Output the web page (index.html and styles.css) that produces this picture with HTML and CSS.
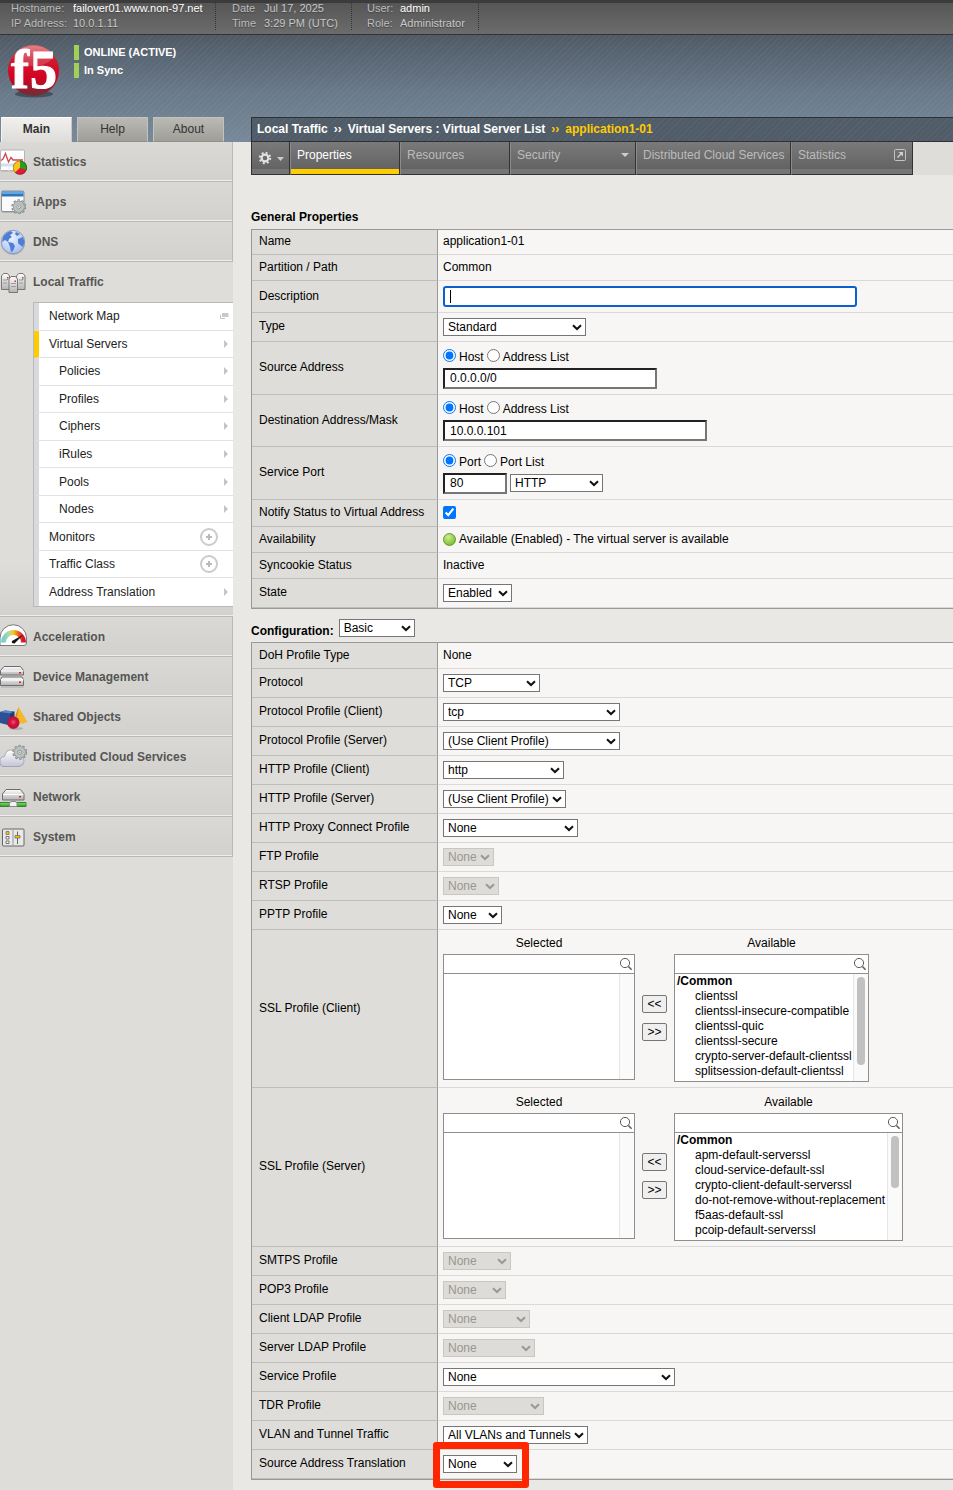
FILE: index.html
```html
<!DOCTYPE html>
<html lang="en">
<head>
<meta charset="utf-8">
<title>Virtual Server Properties</title>
<link rel="stylesheet" href="styles.css">
</head>
<body>
<svg class="defs" aria-hidden="true">
  <defs>
    <linearGradient id="metal" x1="0" y1="0" x2="0" y2="1"><stop offset="0" stop-color="#fdfdfd"/><stop offset="1" stop-color="#b4b4b4"/></linearGradient>
    <linearGradient id="cloud" x1="0" y1="0" x2="0" y2="1"><stop offset="0" stop-color="#ffffff"/><stop offset="1" stop-color="#c3c4d6"/></linearGradient>
    <radialGradient id="globe" cx="0.4" cy="0.3" r="0.8"><stop offset="0" stop-color="#eef4ff"/><stop offset="1" stop-color="#9fb9ec"/></radialGradient>
    <radialGradient id="red" cx="0.5" cy="0.45" r="0.6"><stop offset="0" stop-color="#f0557b"/><stop offset="0.4" stop-color="#d3123f"/><stop offset="1" stop-color="#b50d30"/></radialGradient>
    <radialGradient id="green" cx="0.4" cy="0.3" r="0.8"><stop offset="0" stop-color="#c9f08c"/><stop offset="1" stop-color="#6fb222"/></radialGradient>
    <linearGradient id="ball" x1="0" y1="0" x2="0" y2="1"><stop offset="0" stop-color="#e46a72"/><stop offset="0.3" stop-color="#cf1a30"/><stop offset="0.65" stop-color="#d2021f"/><stop offset="1" stop-color="#6b3038"/></linearGradient>
    <linearGradient id="dial"><stop offset="0" stop-color="#6fd3d0"/><stop offset="0.3" stop-color="#bfd79a"/><stop offset="0.5" stop-color="#f7c81f"/><stop offset="0.75" stop-color="#ee5b23"/><stop offset="1" stop-color="#d8102c"/></linearGradient>
    <symbol id="gear" viewBox="0 0 16 16">
      <circle cx="8" cy="8" r="6.4" fill="none" stroke="#77807f" stroke-width="2.6" stroke-dasharray="2.2 1.82"/>
      <circle cx="8" cy="8" r="4.6" fill="none" stroke="#77807f" stroke-width="3"/>
      <circle cx="8" cy="8" r="4" fill="none" stroke="#b9c2c1" stroke-width="3.2"/>
      <circle cx="8" cy="8" r="6.2" fill="none" stroke="#a9b3b2" stroke-width="1.6" stroke-dasharray="1.8 2.095" stroke-dashoffset="-.2"/>
      <circle cx="8" cy="8" r="2.1" fill="#e4e6e5" stroke="#7c8584" stroke-width=".8"/>
      <circle cx="8" cy="8" r=".7" fill="#7c8584"/>
    </symbol>
    <symbol id="glass" viewBox="0 0 14 14"><circle cx="6" cy="6" r="4.6" fill="none" stroke="#5c5c5c"/><path d="M9.4 9.4L12.6 12.8" stroke="#5c5c5c" stroke-width="1.5"/></symbol>
    <symbol id="arrow" viewBox="0 0 6 8"><path d="M1 0L5 4L1 8Z" fill="#c4c4c4"/></symbol>
    <symbol id="plus" viewBox="0 0 18 18"><circle cx="9" cy="9" r="8" fill="#fff" stroke="#cbcbcb" stroke-width="2"/><path d="M6 9h6M9 6v6" stroke="#b9b9b9" stroke-width="2"/></symbol>
  </defs>
</svg>

<div class="topbar">
  <dl class="info info-host"><dt>Hostname:</dt><dd class="strong">failover01.www.non-97.net</dd><dt>IP Address:</dt><dd>10.0.1.11</dd></dl>
  <dl class="info info-date"><dt>Date</dt><dd>Jul 17, 2025</dd><dt>Time</dt><dd>3:29 PM (UTC)</dd></dl>
  <dl class="info info-user"><dt>User:</dt><dd class="strong">admin</dd><dt>Role:</dt><dd>Administrator</dd></dl>
</div>

<header class="banner">
  <div class="brand">
    <div class="brand-row">
      <svg class="logo" viewBox="0 0 54 56" role="img" aria-label="f5">
        <ellipse cx="27" cy="50" rx="19" ry="3.500" fill="#2c3540" opacity=".6"/>
        <circle cx="26.500" cy="26.500" r="25.500" fill="url(#ball)"/>
        <ellipse cx="26.500" cy="12" rx="19" ry="10" fill="#fff" opacity=".16"/>
        <text x="4" y="44" class="logo-text">f</text>
        <text x="23" y="44" class="logo-text">5</text>
      </svg>
      <div class="status"><span>ONLINE (ACTIVE)</span><span>In Sync</span></div>
    </div>
    <nav class="tabs"><a href="#main" class="tab tab-on">Main</a><a href="#help" class="tab">Help</a><a href="#about" class="tab">About</a></nav>
  </div>
  <nav class="crumbs"><a href="#lt">Local Traffic</a><span>››</span><a href="#vs">Virtual Servers : Virtual Server List</a><span class="gold">››</span><span class="gold">application1-01</span></nav>
</header>

<div class="layout">
<nav class="side">
  <a class="section" href="#statistics"><svg viewBox="0 0 28 28"><rect x="0.500" y="3" width="24" height="20.500" rx="1" fill="#aaa"/><rect x="0.500" y="2" width="24" height="20.500" rx="1" fill="#fff" stroke="#b5b5b5"/><path d="M1 15.500h23v3h-23z" fill="#cfe0ee"/><path d="M9 15v8M17 15v8" stroke="#dfe9f2"/><path d="M1 12.500L3 11 5.500 5.500 8.500 14 11 9.500 13 12H23" fill="none" stroke="#d2434b" stroke-width="1.300"/><circle cx="20" cy="19.700" r="7" fill="#dc1f35"/><path d="M20 19.700V12.700A7 7 0 0 1 26.500 22Z" fill="#22a11c"/><path d="M20 19.700V12.700A7 7 0 0 0 15 24.600Z" fill="#f7c51d"/><circle cx="20" cy="19.700" r="6.700" fill="none" stroke="#000" stroke-opacity=".35" stroke-width=".7"/></svg>Statistics</a>
  <a class="section" href="#iapps"><svg viewBox="0 0 28 28"><rect x="1.500" y="3.500" width="22.500" height="21" rx="1.500" fill="#999"/><rect x="1.500" y="3" width="22.500" height="20.500" rx="1.500" fill="#fbfbfb" stroke="#8d9196"/><path d="M2 3.500h21.500v5H2z" fill="#2d77bd"/><path d="M2 4h21.500v2H2z" fill="#63a6e2"/><use href="#gear" x="11" y="11" width="15.500" height="15.500"/></svg>iApps</a>
  <a class="section" href="#dns"><svg viewBox="0 0 28 28"><circle cx="13" cy="15" r="12" fill="#999" opacity=".5"/><circle cx="13" cy="14" r="11.700" fill="url(#globe)" stroke="#8595b8" stroke-width=".9"/><path d="M3 9Q6 4 11 3L13 5 10 7 12 9 9 11 8 14 5 12 2 14ZM8 14L13 15 15 18 13 23 11 24 10 19ZM16 4L20 6 17 8 15 6ZM18 11L23 9 24.500 14 23 19 20 17 18 15Z" fill="#4f7fd2"/></svg>DNS</a>
  <div class="group">
    <a class="section section-open" href="#local"><svg viewBox="0 0 28 28"><g stroke="#777"><path d="M1.500 8L3.500 5.500H7.500L9.500 8V21.500H1.500ZM16.500 8L18.500 5.500H23L25 8V21.500H16.500Z" fill="url(#metal)"/><path d="M9 11L11 8.500H15.500L17.500 11V24.500H9Z" fill="url(#metal)"/></g><path d="M3 12h4M3 15h4M19 12h4M19 15h4M11 15.500h5M11 18.500h5" stroke="#999"/><path d="M7 9h1.500v1.500H7zM22 9h1.500v1.500H22zM14.500 12.500H16V14h-1.500z" fill="#e02b35"/><path d="M7 11h1.500v1H7zM22 11h1.500v1H22z" fill="#48c04a"/></svg>Local Traffic</a>
    <ul class="sub">
      <li><a href="#map">Network Map</a><svg class="pop" viewBox="0 0 9 6"><path d="M0.500 2V5.500H5" fill="none" stroke="#c4c4c4"/><path d="M2 0h6.500v4H2z" fill="#c9c9c9"/></svg></li>
      <li class="on"><a href="#vservers">Virtual Servers</a><svg class="arr"><use href="#arrow"/></svg></li>
      <li class="deep"><a href="#policies">Policies</a><svg class="arr"><use href="#arrow"/></svg></li>
      <li class="deep"><a href="#profiles">Profiles</a><svg class="arr"><use href="#arrow"/></svg></li>
      <li class="deep"><a href="#ciphers">Ciphers</a><svg class="arr"><use href="#arrow"/></svg></li>
      <li class="deep"><a href="#irules">iRules</a><svg class="arr"><use href="#arrow"/></svg></li>
      <li class="deep"><a href="#pools">Pools</a><svg class="arr"><use href="#arrow"/></svg></li>
      <li class="deep"><a href="#nodes">Nodes</a><svg class="arr"><use href="#arrow"/></svg></li>
      <li><a href="#monitors">Monitors</a><svg class="plus"><use href="#plus"/></svg></li>
      <li><a href="#class">Traffic Class</a><svg class="plus"><use href="#plus"/></svg></li>
      <li><a href="#translation">Address Translation</a><svg class="arr"><use href="#arrow"/></svg></li>
    </ul>
  </div>
  <a class="section" href="#acceleration"><svg viewBox="0 0 28 28"><path d="M0 22V15A13 13 0 0 1 26.500 15V20Q26.500 22.500 24 22.500H0Z" fill="#fff" stroke="#777"/><path d="M3.500 19.500A10 10 0 0 1 23.500 19.500" fill="none" stroke="url(#dial)" stroke-width="5"/><path d="M12 18L23.500 11.500 14.500 20.500Q11 20.500 12 18Z" fill="#111"/></svg>Acceleration</a>
  <a class="section" href="#device"><svg viewBox="0 0 28 28"><g stroke="#6d6d6d"><path d="M0.500 7.500L4 3.500H20.500L23.500 7.500V12H0.500Z" fill="url(#metal)"/><path d="M0.500 16.500L2 14H22L23.500 16.500V22.500H0.500Z" fill="url(#metal)"/></g><path d="M1 8h22.500M1 17h22.500" stroke="#fff"/><path d="M1 24h22.500" stroke="#aaa"/><path d="M19 9h2v1.500h-2zM19 18.500h2V20h-2z" fill="#e01f35"/></svg>Device Management</a>
  <a class="section" href="#shared"><svg viewBox="0 0 28 28"><path d="M18.500 4L27.500 19 23 20.500 13 20Z" fill="#f3b82c"/><path d="M18.500 4L13 20H16Z" fill="#c98d1c"/><path d="M0 9L5 7.500 14.500 8.500 12.500 10.500V20L8 22 0 20Z" fill="#2d4f95"/><path d="M0 9L5 7.500 14.500 8.500 10 10.500Z" fill="#5f83c4"/><path d="M10 10.500L14.500 8.500V18L10 21Z" fill="#1f3c78"/><ellipse cx="16" cy="25.500" rx="7" ry="1.500" fill="#888" opacity=".5"/><circle cx="13.300" cy="19.700" r="6.200" fill="url(#red)"/></svg>Shared Objects</a>
  <a class="section" href="#cloud"><svg viewBox="0 0 28 28"><path d="M0 16Q2 13 4.500 13.500Q6 6 12 7Q17 7 18 13Q24 14 24 18.500Q23.500 23 19 23.500H3Q0 23 0 20Z" fill="url(#cloud)" stroke="#9a9aa8" stroke-width=".8"/><use href="#gear" x="12" y="1.500" width="15.500" height="15.500"/></svg>Distributed Cloud Services</a>
  <a class="section" href="#network"><svg viewBox="0 0 28 28"><path d="M2.500 11L6 6.500H20.500L24 11V17H2.500Z" fill="url(#metal)" stroke="#6d6d6d"/><path d="M3 11.500h20.500" stroke="#fff"/><path d="M19 13h2v1.500h-2z" fill="#e01f35"/><path d="M0 19.500H26V23.500H0Z" fill="#39b32f" stroke="#3d7c38"/><path d="M0 20.800h26" stroke="#7fe070"/><path d="M9.500 23.500V19.500L12 18.500H15L17 19.500V23.500Z" fill="#f3f3f3" stroke="#888"/></svg>Network</a>
  <a class="section" href="#system"><svg viewBox="0 0 28 28"><rect x="2.500" y="6" width="21.500" height="17" rx="1" fill="#e9e9e9" stroke="#666"/><path d="M13 7v15" stroke="#999"/><path d="M6 8.500h3v3H6z" fill="#f5c400" stroke="#666" stroke-width=".7"/><path d="M6 13.500h3v2.500H6zM6 18h3v2.500H6z" fill="#fff" stroke="#555" stroke-width=".8"/><path d="M17.500 8.500V21" stroke="#666"/><path d="M15 12.500h5v2.500h-5z" fill="#f5c400" stroke="#666" stroke-width=".7"/></svg>System</a>
</nav>

<main class="main">
  <div class="menubar">
    <button class="gearbtn" type="button" aria-label="Options"><svg viewBox="0 0 28 14"><circle cx="7" cy="7" r="5.200" fill="none" stroke="#ddd" stroke-width="2" stroke-dasharray="2 2.084"/><circle cx="7" cy="7" r="3.400" fill="none" stroke="#e2e2e2" stroke-width="2.200"/><path d="M19 6h7l-3.500 4z" fill="#ccc"/></svg></button>
    <a class="mitem mitem-on" href="#properties">Properties</a>
    <a class="mitem" href="#resources">Resources</a>
    <a class="mitem mitem-sec" href="#security">Security<svg class="caret" viewBox="0 0 8 4"><path d="M0 0h8L4 4z" fill="#ccc"/></svg></a>
    <a class="mitem mitem-dcs" href="#dcs">Distributed Cloud Services</a>
    <a class="mitem mitem-stat" href="#stats">Statistics<svg class="ext" viewBox="0 0 12 12"><rect x="0.500" y="0.500" width="11" height="11" rx="1" fill="none" stroke="#c4c4c4"/><path d="M3.500 8.500L7 5" stroke="#d0d0d0" stroke-width="1.500"/><path d="M4.500 3h4.500v4.500z" fill="#d0d0d0"/></svg></a>
  </div>

  <h2 class="heading">General Properties</h2>
  <table class="props">
    <tr class="r-top"><th>Name</th><td>application1-01</td></tr>
    <tr><th>Partition / Path</th><td>Common</td></tr>
    <tr class="r-field"><th><label for="desc">Description</label></th><td><div class="focusbox"><input id="desc" class="field field-focus" type="text"><span class="caretline"></span></div></td></tr>
    <tr class="r-sel"><th><label for="type">Type</label></th><td><select id="type" class="sel s-type"><option>Standard</option></select></td></tr>
    <tr class="r-addr"><th><label for="src">Source Address</label></th><td>
      <div class="radios"><input type="radio" name="src" id="s1" checked><label for="s1">Host</label><input type="radio" name="src" id="s2"><label for="s2">Address List</label></div>
      <input id="src" class="field f-src" type="text" value="0.0.0.0/0"></td></tr>
    <tr class="r-addr r-mask"><th><label for="dst">Destination Address/Mask</label></th><td>
      <div class="radios"><input type="radio" name="dst" id="d1" checked><label for="d1">Host</label><input type="radio" name="dst" id="d2"><label for="d2">Address List</label></div>
      <input id="dst" class="field f-dst" type="text" value="10.0.0.101"></td></tr>
    <tr class="r-addr"><th><label for="port">Service Port</label></th><td>
      <div class="radios"><input type="radio" name="prt" id="p1" checked><label for="p1">Port</label><input type="radio" name="prt" id="p2"><label for="p2">Port List</label></div>
      <div class="portrow"><input id="port" class="field f-port" type="text" value="80"><select class="sel s-port" aria-label="Service"><option>HTTP</option></select></div></td></tr>
    <tr class="r-check"><th><label for="notify">Notify Status to Virtual Address</label></th><td><input id="notify" class="check" type="checkbox" checked></td></tr>
    <tr><th>Availability</th><td><span class="avail"><svg viewBox="0 0 13 13"><circle cx="6.500" cy="6.500" r="6" fill="url(#green)" stroke="#6a9a35"/></svg>Available (Enabled) - The virtual server is available</span></td></tr>
    <tr><th>Syncookie Status</th><td>Inactive</td></tr>
    <tr class="r-sel"><th><label for="state">State</label></th><td><select id="state" class="sel s-state"><option>Enabled</option></select></td></tr>
  </table>

  <div class="config"><label for="conf">Configuration:</label><select id="conf" class="sel s-conf"><option>Basic</option></select></div>
  <table class="props">
    <tr><th>DoH Profile Type</th><td>None</td></tr>
    <tr class="r-sel"><th><label for="c1">Protocol</label></th><td><select id="c1" class="sel s-proto"><option>TCP</option></select></td></tr>
    <tr class="r-sel"><th><label for="c2">Protocol Profile (Client)</label></th><td><select id="c2" class="sel s-pprof"><option>tcp</option></select></td></tr>
    <tr class="r-sel"><th><label for="c3">Protocol Profile (Server)</label></th><td><select id="c3" class="sel s-pprof"><option>(Use Client Profile)</option></select></td></tr>
    <tr class="r-sel"><th><label for="c4">HTTP Profile (Client)</label></th><td><select id="c4" class="sel s-httpc"><option>http</option></select></td></tr>
    <tr class="r-sel"><th><label for="c5">HTTP Profile (Server)</label></th><td><select id="c5" class="sel s-https"><option>(Use Client Profile)</option></select></td></tr>
    <tr class="r-sel"><th><label for="c6">HTTP Proxy Connect Profile</label></th><td><select id="c6" class="sel s-proxy"><option>None</option></select></td></tr>
    <tr class="r-sel"><th><label for="c7">FTP Profile</label></th><td><select id="c7" class="sel s-ftp" disabled><option>None</option></select></td></tr>
    <tr class="r-sel"><th><label for="c8">RTSP Profile</label></th><td><select id="c8" class="sel s-rtsp" disabled><option>None</option></select></td></tr>
    <tr class="r-sel"><th><label for="c9">PPTP Profile</label></th><td><select id="c9" class="sel s-pptp"><option>None</option></select></td></tr>
    <tr class="r-pick"><th>SSL Profile (Client)</th><td>
      <div class="picker">
        <div class="pcol"><label for="l1">Selected</label><div class="box"><div class="search"><input type="text" aria-label="Filter selected"><svg><use href="#glass"/></svg></div><div class="listrow"><select id="l1" class="list" multiple></select><div class="track"></div></div></div></div>
        <div class="moves"><button type="button">&lt;&lt;</button><button type="button">&gt;&gt;</button></div>
        <div class="pcol pcol-client"><label for="l2">Available</label><div class="box box-full"><div class="search"><input type="text" aria-label="Filter available"><svg><use href="#glass"/></svg></div><div class="listrow"><select id="l2" class="list" multiple><optgroup label="/Common"><option>clientssl</option><option>clientssl-insecure-compatible</option><option>clientssl-quic</option><option>clientssl-secure</option><option>crypto-server-default-clientssl</option><option>splitsession-default-clientssl</option></optgroup></select><div class="track"><div class="thumb thumb-long"></div></div></div></div></div>
      </div></td></tr>
    <tr class="r-pick r-server"><th>SSL Profile (Server)</th><td>
      <div class="picker">
        <div class="pcol"><label for="l3">Selected</label><div class="box"><div class="search"><input type="text" aria-label="Filter selected"><svg><use href="#glass"/></svg></div><div class="listrow"><select id="l3" class="list" multiple></select><div class="track"></div></div></div></div>
        <div class="moves"><button type="button">&lt;&lt;</button><button type="button">&gt;&gt;</button></div>
        <div class="pcol pcol-server"><label for="l4">Available</label><div class="box box-full"><div class="search"><input type="text" aria-label="Filter available"><svg><use href="#glass"/></svg></div><div class="listrow"><select id="l4" class="list" multiple><optgroup label="/Common"><option>apm-default-serverssl</option><option>cloud-service-default-ssl</option><option>crypto-client-default-serverssl</option><option>do-not-remove-without-replacement</option><option>f5aas-default-ssl</option><option>pcoip-default-serverssl</option></optgroup></select><div class="track"><div class="thumb"></div></div></div></div></div>
      </div></td></tr>
    <tr class="r-sel"><th><label for="e1">SMTPS Profile</label></th><td><select id="e1" class="sel s-smtps" disabled><option>None</option></select></td></tr>
    <tr class="r-sel"><th><label for="e2">POP3 Profile</label></th><td><select id="e2" class="sel s-pop" disabled><option>None</option></select></td></tr>
    <tr class="r-sel"><th><label for="e3">Client LDAP Profile</label></th><td><select id="e3" class="sel s-cldap" disabled><option>None</option></select></td></tr>
    <tr class="r-sel"><th><label for="e4">Server LDAP Profile</label></th><td><select id="e4" class="sel s-sldap" disabled><option>None</option></select></td></tr>
    <tr class="r-sel"><th><label for="e5">Service Profile</label></th><td><select id="e5" class="sel s-service"><option>None</option></select></td></tr>
    <tr class="r-sel"><th><label for="e6">TDR Profile</label></th><td><select id="e6" class="sel s-tdr" disabled><option>None</option></select></td></tr>
    <tr class="r-sel"><th><label for="e7">VLAN and Tunnel Traffic</label></th><td><select id="e7" class="sel s-vlan"><option>All VLANs and Tunnels</option></select></td></tr>
    <tr class="r-sel"><th><label for="e8">Source Address Translation</label></th><td><div class="marked"><select id="e8" class="sel s-sat"><option>None</option></select></div></td></tr>
  </table>
</main>
</div>
</body>
</html>
```
FILE: styles.css
```css
* { box-sizing: border-box; }
body {
  margin: 0;
  min-height: 100vh;
  display: flex;
  flex-direction: column;
  overflow-x: hidden;
  background: #e9e8e4;
  color: #000;
  font: 12px/16px "Liberation Sans", Arial, sans-serif;
}
a { color: inherit; text-decoration: none; }
button, input, select { font: inherit; color: inherit; }
svg { display: block; flex: none; }
.defs { position: absolute; width: 0; height: 0; }

/* Device information strip */
.topbar {
  display: flex;
  height: 35px;
  padding-bottom: 4px;
  border-top: 3px solid #3b3b3b;
  border-bottom: 1px solid #333;
  background: linear-gradient(#565656, #6c6c6c);
}
.info {
  display: grid;
  margin: 0;
  padding-bottom: 2px;
  line-height: 15px;
  font-size: 11px;
  align-content: center;
  color: #c8c8c8;
  border-right: 1px dotted #333;
  text-shadow: 0 1px 1px #444;
}
.info dt { color: #bcbcbc; }
.info dd { margin: 0; }
.info .strong { color: #fff; }
.info-host { width: 216px; padding-left: 11px; grid-template-columns: 62px 1fr; }
.info-date { width: 136px; padding-left: 16px; grid-template-columns: 32px 1fr; }
.info-user { width: 127px; padding-left: 15px; grid-template-columns: 33px 1fr; }

/* Banner */
.banner {
  display: flex;
  height: 107px;
  align-items: stretch;
  background:
    repeating-linear-gradient(135deg, rgba(255,255,255,.04) 0 1px, transparent 1px 4px),
    linear-gradient(#4f5a65, #6a7a8a 55%, #77899a);
}
.brand {
  width: 251px;
  flex: none;
  display: flex;
  flex-direction: column;
  justify-content: space-between;
}
.brand-row { display: flex; gap: 13px; padding: 9px 0 0 7px; }
.logo { width: 54px; height: 56px; overflow: visible; }
.logo-text { font: bold 54px "Liberation Serif", serif; fill: #fff; stroke: #fff; stroke-width: 1px; }
.status { display: flex; flex-direction: column; gap: 3px; padding-top: 1px; }
.status span {
  padding-left: 5px;
  border-left: 5px solid #9fd158;
  color: #fff;
  font-size: 11px;
  font-weight: bold;
  line-height: 15px;
}
.tabs { display: flex; gap: 5px; padding-left: 1px; }
.tab {
  width: 71px;
  height: 25px;
  border: 1px solid #c3c3be;
  border-bottom-color: #90908a;
  background: linear-gradient(#bab9b4, #9f9f98);
  line-height: 22px;
  text-align: center;
  color: #333;
}
.tab-on {
  border-color: #fff #c8c8c4 #deddd9 #f4f4f2;
  background: linear-gradient(#f1f0ee, #deddd9);
  font-weight: bold;
}
.crumbs {
  flex: 1;
  align-self: flex-end;
  display: flex;
  gap: 6px;
  height: 25px;
  padding-left: 5px;
  border: solid #2d3034;
  border-width: 1px 0 1px 1px;
  background: repeating-linear-gradient(135deg, rgba(255,255,255,.04) 0 1px, transparent 1px 4px), #505c68;
  color: #fff;
  font-weight: bold;
  line-height: 22px;
  white-space: nowrap;
}
.gold { color: #fc0; }

/* Page columns */
.layout { flex: 1; display: grid; grid-template-columns: 233px 1fr; }

.side { background: #deddd9; }
.section {
  display: flex;
  align-items: center;
  gap: 5px;
  height: 40px;
  border-right: 1px solid #b9b9b9;
  border-bottom: 1px solid #b9b9b9;
  box-shadow: inset 0 -1px #efeeec;
  background: linear-gradient(#dad9d6, #d2d1cd);
  color: #555;
  font-weight: bold;
}
.section svg { width: 28px; height: 28px; }
.section-open { border: 0; box-shadow: none; background: none; }
.group {
  padding-bottom: 9px;
  border-bottom: 1px solid #b9b9b9;
  box-shadow: inset 0 -1px #efeeec;
  background: linear-gradient(#deddd9 85%, #d2d1cd);
}
.sub {
  display: grid;
  grid-auto-rows: 1fr;
  min-height: 305px;
  margin: 0 0 0 33px;
  padding: 0;
  list-style: none;
  border: solid #b9b9b9;
  border-width: 1px 0 1px 1px;
}
.sub li {
  display: flex;
  align-items: center;
  justify-content: space-between;
  padding: 0 4px 0 10px;
  border-left: 5px solid #d9d9dd;
  border-bottom: 1px solid #e2e2e2;
  background: #fff;
  color: #222;
}
.sub li:last-child { border-bottom: 0; }
.sub .deep { padding-left: 20px; }
.sub .on { border-left-color: #fc0; }
.arr { width: 6px; height: 8px; }
.pop { width: 9px; height: 6px; }
.plus { width: 18px; height: 18px; margin-right: 11px; }

/* Page menu */
.main { min-width: 0; padding: 0 0 10px 18px; }
.menubar { display: flex; height: 33px; background: #deddd9; border-left: 1px solid #333; }
.gearbtn, .mitem {
  border: 0;
  border-right: 1px solid #333;
  border-bottom: 1px solid #333;
  background: linear-gradient(#7a7a7a, #636363 27px, #757575 27px);
}
.gearbtn { width: 38px; padding: 0 0 0 6px; }
.gearbtn svg { width: 28px; height: 14px; }
.mitem {
  display: flex;
  justify-content: space-between;
  width: 110px;
  padding-left: 6px;
  border-left: 1px solid #8b8b8b;
  line-height: 26px;
  color: #bcbcbc;
  white-space: nowrap;
}
.mitem-on { color: #fff; background: linear-gradient(#7a7a7a, #636363 27px, #fc0 27px); }
.mitem-sec { width: 126px; }
.mitem-dcs { width: 155px; }
.mitem-stat { width: 122px; }
.caret { width: 8px; height: 4px; margin: 11px 6px 0 0; }
.ext { width: 12px; height: 12px; margin: 7px 6px 0 0; }

/* Property tables */
.heading { margin: 30px 0 0; font-size: 12px; line-height: 24px; }
.props {
  width: 100%;
  border: solid #999;
  border-width: 1px 0 1px 1px;
  border-spacing: 0;
}
.props th, .props td { height: 26px; padding: 0 0 0 5px; }
.props th {
  width: 186px;
  padding: 0 0 2px 7px;
  border-right: 1px solid #999;
  border-bottom: 1px solid #bdbdba;
  background: #deddd9;
  font-weight: normal;
  text-align: left;
}
.props td { padding-bottom: 2px; border-bottom: 1px solid #dad9d7; background: #f7f6f4; }
.props .r-top > * { height: 25px; }
.props .r-check > * { height: 27px; }
.props .r-sel > * { height: 29px; }
.props .r-field > * { height: 32px; }
.props .r-addr > * { height: 53px; }
.props .r-mask > * { height: 52px; }
.props .r-sel td, .props .r-field td, .props .r-addr td { padding-bottom: 0; }

.field {
  display: block;
  height: 21px;
  margin: 0;
  padding: 0 5px;
  border: 2px solid #767676;
  border-top-color: #222;
  border-left-color: #222;
  background: #fff;
}
.field-focus { width: 100%; border-color: #0b5fcf; border-radius: 3px; outline: 0; }
.focusbox { position: relative; max-width: 414px; }
.caretline { position: absolute; left: 7px; top: 4px; width: 1px; height: 13px; background: #000; }
.f-src { width: 214px; }
.f-dst { width: 264px; }
.f-port { width: 64px; }
.radios { display: flex; align-items: flex-start; gap: 3px; padding: 1px 0 3px; }
.radios input { width: 13px; height: 13px; margin: 0; }
.portrow { display: flex; align-items: center; gap: 3px; }
.check { display: block; width: 13px; height: 13px; margin: 0; }
.avail { display: flex; align-items: center; gap: 3px; }
.avail svg { width: 13px; height: 13px; margin-top: 2px; }

.sel {
  display: block;
  height: 18px;
  margin: 0;
  padding: 0 0 0 4px;
  border: 1px solid #767676;
  border-radius: 0;
  appearance: none;
  background: #fff url("data:image/svg+xml,%3Csvg xmlns='http://www.w3.org/2000/svg' width='10' height='7'%3E%3Cpath d='M1 1.200L5 5L9 1.200' fill='none' stroke='%23111' stroke-width='2'/%3E%3C/svg%3E") no-repeat right 3px center;
}
.sel:disabled {
  border-color: #c9c7c2;
  background-color: #dedcd8;
  background-image: url("data:image/svg+xml,%3Csvg xmlns='http://www.w3.org/2000/svg' width='10' height='7'%3E%3Cpath d='M1 1.200L5 5L9 1.200' fill='none' stroke='%23999' stroke-width='2'/%3E%3C/svg%3E");
  color: #999790;
  opacity: 1;
}
.s-type { width: 143px; }
.s-port { width: 93px; }
.s-state { width: 69px; }
.s-conf { width: 76px; }
.s-proto { width: 97px; }
.s-pprof { width: 177px; }
.s-httpc { width: 121px; }
.s-https { width: 123px; }
.s-proxy { width: 135px; }
.s-ftp { width: 51px; }
.s-rtsp { width: 56px; }
.s-pptp { width: 59px; }
.s-smtps { width: 68px; }
.s-pop { width: 63px; }
.s-cldap { width: 87px; }
.s-sldap { width: 92px; }
.s-service { width: 232px; }
.s-tdr { width: 101px; }
.s-vlan { width: 145px; }
.s-sat { width: 74px; }

.config { display: flex; align-items: flex-end; gap: 5px; padding: 10px 0 5px; }
.config label { font-weight: bold; line-height: 12px; }

/* Two-list picker */
.props .r-pick td { padding-top: 5px; padding-bottom: 5px; }
.props .r-server > * { height: 159px; }
.picker { display: flex; gap: 7px; align-items: flex-start; }
.pcol { width: 192px; }
.pcol-client { width: 195px; }
.pcol-server { width: 229px; }
.pcol label { display: block; margin-bottom: 3px; text-align: center; }
.box { display: flex; flex-direction: column; height: 126px; border: 1px solid #8e8e8e; background: #fff; }
.box-full { height: 128px; }
.search { display: flex; align-items: center; height: 19px; padding-right: 1px; border-bottom: 1px solid #8e8e8e; }
.search input { flex: 1; min-width: 0; height: 18px; border: 0; padding: 0 4px; background: none; }
.search svg { width: 14px; height: 14px; }
.listrow { flex: 1; min-height: 0; display: flex; }
.list {
  flex: 1;
  min-width: 0;
  margin: 0;
  padding: 0;
  border: 0;
  border-radius: 0;
  background: #fff;
  overflow: hidden;
  scrollbar-width: none;
}
.list optgroup { padding: 0; }
.list option { padding: 0 0 1px 20px; min-height: 0; }
.track { width: 15px; padding: 3px 3px 0; border-left: 1px solid #e6e6e6; background: #fafafa; }
.thumb { width: 8px; height: 52px; border-radius: 4px; background: #c1c1c1; }
.thumb-long { height: 88px; }
.moves { display: flex; flex-direction: column; gap: 10px; align-self: center; padding-top: 18px; }
.moves button {
  width: 25px;
  height: 18px;
  padding: 0;
  border: 1px solid #767676;
  border-radius: 2px;
  background: #efefef;
  line-height: 14px;
}

/* Callout frame round the control */
.marked { position: relative; width: 74px; }
.marked::after {
  content: "";
  position: absolute;
  inset: -13px -12px -15px -10px;
  border: 7px solid #ff2600;
  border-radius: 3px;
  pointer-events: none;
}
```
